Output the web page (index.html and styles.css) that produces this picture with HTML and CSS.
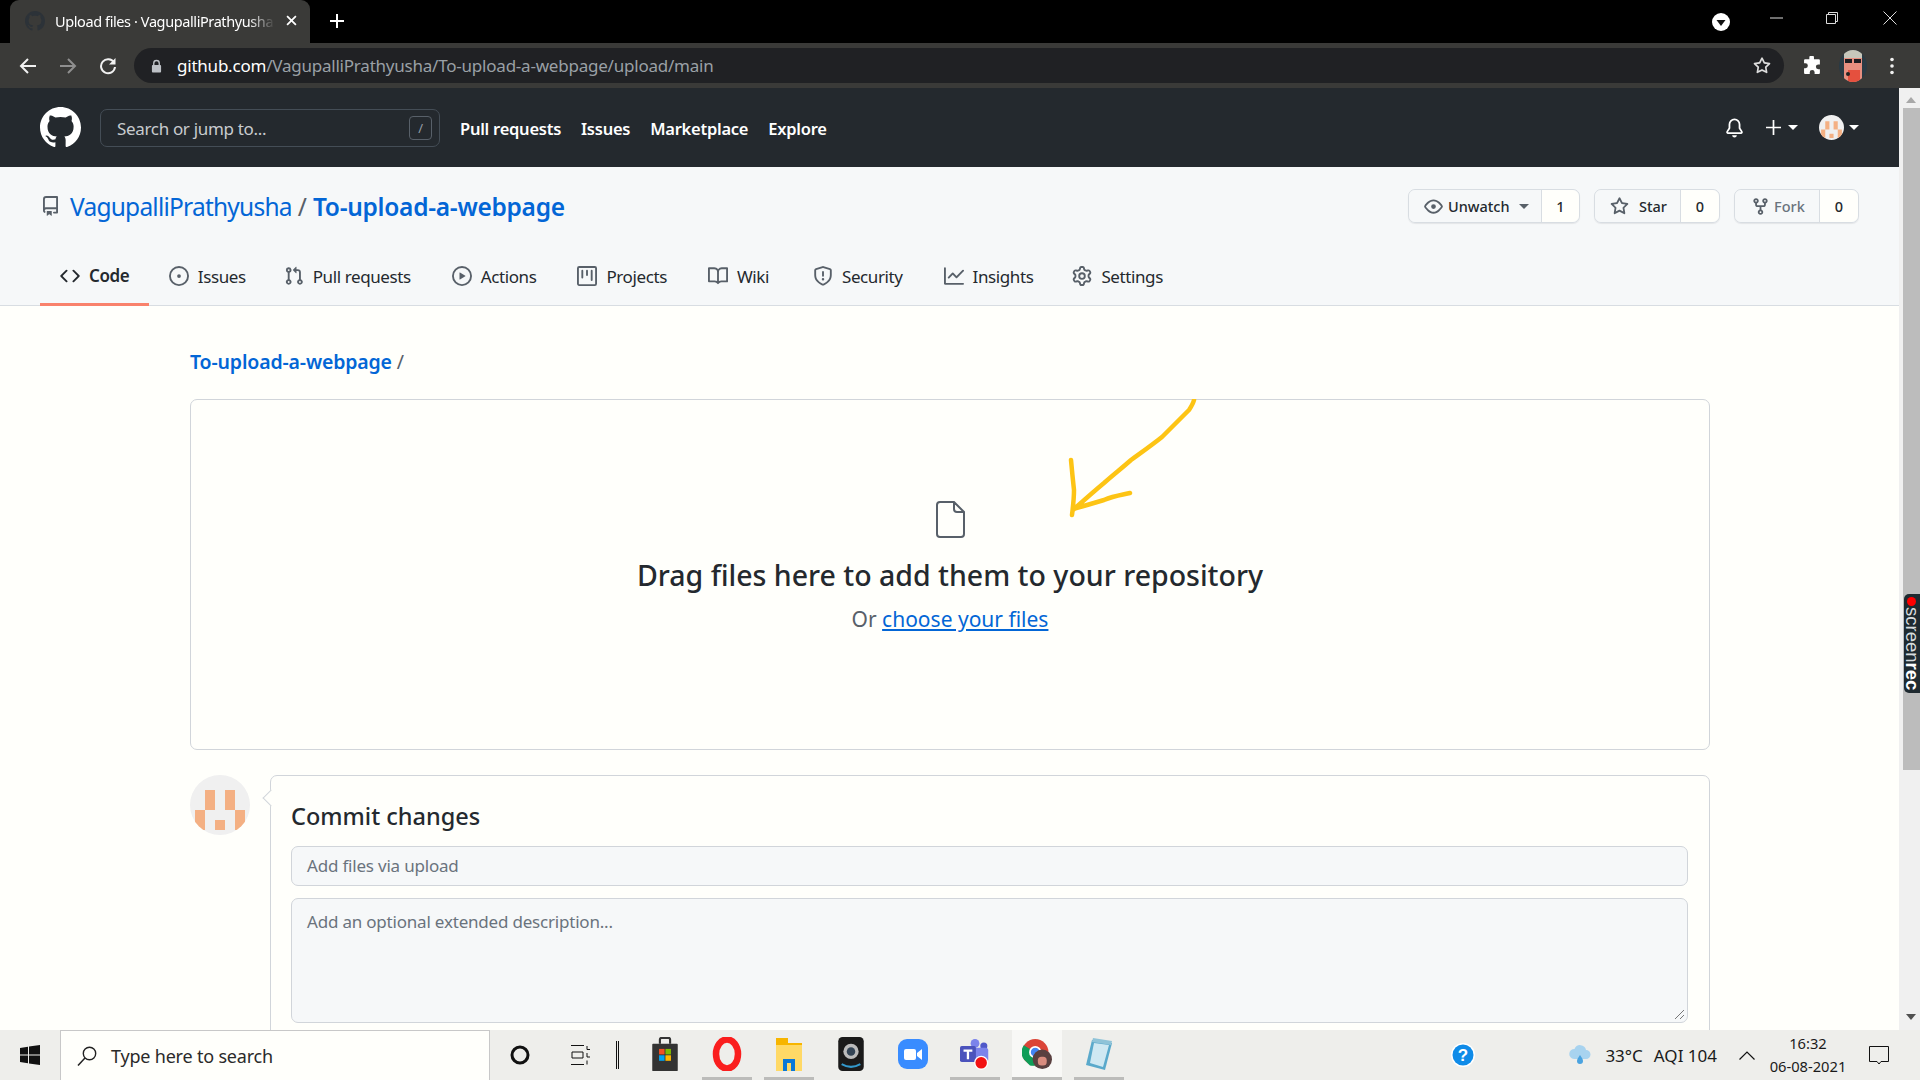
FILE: index.html
```html
<!DOCTYPE html>
<html>
<head>
<meta charset="utf-8">
<title>Upload files · VagupalliPrathyusha/To-upload-a-webpage</title>
<link rel="stylesheet" href="styles.css">
</head>
<body>

<!-- browser tabs -->
<div class="tabstrip">
  <div class="tab">
    <svg class="tab-favicon" viewBox="0 0 16 16"><path fill="#2c3238" d="M8 0C3.58 0 0 3.58 0 8c0 3.54 2.29 6.53 5.47 7.59.4.07.55-.17.55-.38 0-.19-.01-.82-.01-1.49-2.01.37-2.53-.49-2.69-.94-.09-.23-.48-.94-.82-1.13-.28-.15-.68-.52-.01-.53.63-.01 1.08.58 1.23.82.72 1.21 1.87.87 2.33.66.07-.52.28-.87.51-1.07-1.78-.2-3.64-.89-3.64-3.95 0-.87.31-1.59.82-2.15-.08-.2-.36-1.02.08-2.12 0 0 .67-.21 2.2.82.64-.18 1.32-.27 2-.27.68 0 1.36.09 2 .27 1.53-1.04 2.2-.82 2.2-.82.44 1.1.16 1.92.08 2.12.51.56.82 1.27.82 2.15 0 3.07-1.87 3.75-3.65 3.95.29.25.54.73.54 1.48 0 1.07-.01 1.93-.01 2.2 0 .21.15.46.55.38A8.013 8.013 0 0016 8c0-4.42-3.58-8-8-8z"/></svg>
    <span class="tab-title">Upload files · VagupalliPrathyusha</span>
    <svg class="tab-close" viewBox="0 0 10 10"><path d="M1 1l8 8M9 1l-8 8" stroke="#fff" stroke-width="1.6"/></svg>
  </div>
  <svg class="tab-new" viewBox="0 0 14 14"><path d="M7 0v14M0 7h14" stroke="#fff" stroke-width="2"/></svg>
  <svg class="tab-search" viewBox="0 0 18 18"><circle cx="9" cy="9" r="9" fill="#fff"/><path d="M4.5 7h9L9 13z" fill="#111"/></svg>
  <svg class="win-btn" viewBox="0 0 14 14"><path d="M0 7h13" stroke="#ddd"/></svg>
  <svg class="win-btn" viewBox="0 0 14 14"><path d="M1.5 3.5h9v9h-9zM3.5 3.5v-2h9v9h-2" fill="none" stroke="#ddd"/></svg>
  <svg class="win-btn win-close" viewBox="0 0 14 14"><path d="M.5.5l13 13M13.5.5l-13 13" stroke="#ddd"/></svg>
</div>

<!-- browser toolbar -->
<div class="toolbar">
  <svg class="nav-btn" viewBox="0 0 18 18"><path d="M17 9H2M9 2L2 9l7 7" fill="none" stroke="#f1f1f1" stroke-width="2"/></svg>
  <svg class="nav-btn" viewBox="0 0 18 18"><path d="M1 9h15M9 2l7 7-7 7" fill="none" stroke="#8f8f8f" stroke-width="2"/></svg>
  <svg class="nav-btn" viewBox="0 0 18 18"><path d="M15 5.5A7 7 0 1016 10" fill="none" stroke="#f1f1f1" stroke-width="2"/><path d="M16.5 1v6.5H10z" fill="#f1f1f1"/></svg>
  <div class="omnibox">
    <svg class="omni-lock" viewBox="0 0 12 14"><path d="M3 6V4a3 3 0 016 0v2" fill="none" stroke="#bdc1c6" stroke-width="1.5"/><rect y="6" x="1" width="10" height="8" rx="1" fill="#bdc1c6"/></svg>
    <span class="omni-url"><b>github.com</b>/VagupalliPrathyusha/To-upload-a-webpage/upload/main</span>
    <svg class="omni-star" viewBox="0 0 16 16"><path fill="#dcdcdc" d="M8 .25a.75.75 0 01.673.418l1.882 3.815 4.21.612a.75.75 0 01.416 1.279l-3.046 2.97.719 4.192a.75.75 0 01-1.088.791L8 12.347l-3.766 1.98a.75.75 0 01-1.088-.79l.72-4.194L.818 6.374a.75.75 0 01.416-1.28l4.21-.611L7.327.668A.75.75 0 018 .25zm0 2.445L6.615 5.5a.75.75 0 01-.564.41l-3.097.45 2.24 2.184a.75.75 0 01.216.664l-.528 3.084 2.769-1.456a.75.75 0 01.698 0l2.77 1.456-.53-3.084a.75.75 0 01.216-.664l2.24-2.183-3.096-.45a.75.75 0 01-.564-.41L8 2.694v.001z"/></svg>
  </div>
  <svg class="ext-puzzle" viewBox="0 0 18 18"><path fill="#fff" d="M6 1.5a2.2 2.2 0 014.4 0V3H15a1 1 0 011 1v4h-1.5a2.3 2.3 0 000 4.6H16V16a1 1 0 01-1 1h-4v-1.5a2.3 2.3 0 00-4.6 0V17H2a1 1 0 01-1-1v-4.5h1.3a2.3 2.3 0 000-4.6H1V4a1 1 0 011-1h4z"/></svg>
  <svg class="profile-pic" viewBox="0 0 28 32"><defs><clipPath id="pclip"><ellipse cx="14" cy="16" rx="14" ry="16"/></clipPath></defs><g clip-path="url(#pclip)"><rect width="28" height="32" fill="#2a3a44"/><rect x="5" y="0" width="18" height="8" fill="#c7c7bb"/><rect x="5" y="8" width="18" height="24" fill="#e88f80"/><rect x="6" y="9" width="7" height="4" fill="#1d1d22"/><rect x="15" y="9" width="7" height="4" fill="#1d1d22"/><rect x="9" y="20" width="12" height="12" fill="#e5503e"/><circle cx="9" cy="24" r="2" fill="#222"/></g></svg>
  <svg class="chrome-menu" viewBox="0 0 4 18"><circle cx="2" cy="2.5" r="1.8" fill="#f1f1f1"/><circle cx="2" cy="9" r="1.8" fill="#f1f1f1"/><circle cx="2" cy="15.5" r="1.8" fill="#f1f1f1"/></svg>
</div>

<div class="viewport">
  <div class="page">

    <!-- github header -->
    <header class="gh-header">
      <svg class="gh-logo" viewBox="0 0 16 16"><path fill="#fff" d="M8 0C3.58 0 0 3.58 0 8c0 3.54 2.29 6.53 5.47 7.59.4.07.55-.17.55-.38 0-.19-.01-.82-.01-1.49-2.01.37-2.53-.49-2.69-.94-.09-.23-.48-.94-.82-1.13-.28-.15-.68-.52-.01-.53.63-.01 1.08.58 1.23.82.72 1.21 1.87.87 2.33.66.07-.52.28-.87.51-1.07-1.78-.2-3.64-.89-3.64-3.95 0-.87.31-1.59.82-2.15-.08-.2-.36-1.02.08-2.12 0 0 .67-.21 2.2.82.64-.18 1.32-.27 2-.27.68 0 1.36.09 2 .27 1.53-1.04 2.2-.82 2.2-.82.44 1.1.16 1.92.08 2.12.51.56.82 1.27.82 2.15 0 3.07-1.87 3.75-3.65 3.95.29.25.54.73.54 1.48 0 1.07-.01 1.93-.01 2.2 0 .21.15.46.55.38A8.013 8.013 0 0016 8c0-4.42-3.58-8-8-8z"/></svg>
      <div class="gh-search">
        <span>Search or jump to...</span>
        <kbd class="gh-slash">/</kbd>
      </div>
      <nav class="gh-nav">
        <a>Pull requests</a>
        <a>Issues</a>
        <a>Marketplace</a>
        <a>Explore</a>
      </nav>
      <div class="gh-right">
        <svg class="gh-bell" viewBox="0 0 16 16"><path fill="#fff" d="M8 16a2 2 0 001.985-1.75c.017-.137-.097-.25-.235-.25h-3.5c-.138 0-.252.113-.235.25A2 2 0 008 16z"/><path fill="#fff" d="M8 1.5A3.5 3.5 0 004.5 5v2.947c0 .346-.102.683-.294.97l-1.703 2.556a.018.018 0 00-.003.01l.001.006c0 .002.002.004.004.006a.017.017 0 00.006.004l.007.001h10.964l.007-.001a.016.016 0 00.006-.004.016.016 0 00.004-.006l.001-.007a.017.017 0 00-.003-.01l-1.703-2.554a1.75 1.75 0 01-.294-.97V5A3.5 3.5 0 008 1.5zM3 5a5 5 0 0110 0v2.947c0 .05.015.098.042.139l1.703 2.555A1.518 1.518 0 0113.482 13H2.518a1.518 1.518 0 01-1.263-2.36l1.703-2.554A.25.25 0 003 7.947V5z"/></svg>
        <svg class="gh-plus" viewBox="0 0 14 14"><path d="M7 0v14M0 7h14" stroke="#fff" stroke-width="1.6"/></svg>
        <span class="caret caret-white"></span>
        <svg class="gh-avatar" viewBox="0 0 60 60"><rect width="60" height="60" fill="#f0f0f0"/><path fill="#f4b083" d="M15 15h10v20H15zM35 15h10v20H35zM5 35h10v20H5zM45 35h10v20H45zM25 45h10v10H25z"/></svg>
        <span class="caret caret-white"></span>
      </div>
    </header>

    <!-- repo head -->
    <div class="repo-head">
      <div class="repo-top">
        <svg class="repo-icon" viewBox="2 0 12 16"><path fill="#586069" d="M2 2.5A2.5 2.5 0 014.5 0h8.75a.75.75 0 01.75.75v12.5a.75.75 0 01-.75.75h-2.5a.75.75 0 110-1.5h1.75v-2h-8a1 1 0 00-.714 1.7.75.75 0 01-1.072 1.05A2.495 2.495 0 012 11.5v-9zm10.5-1V9h-8c-.356 0-.694.074-1 .208V2.5a1 1 0 011-1h8zM5 12.25v3.25a.25.25 0 00.4.2l1.45-1.087a.25.25 0 01.3 0L8.6 15.7a.25.25 0 00.4-.2v-3.25a.25.25 0 00-.25-.25h-3.5a.25.25 0 00-.25.25z"/></svg>
        <h1 class="repo-title"><a class="repo-owner">VagupalliPrathyusha</a><span class="repo-sep">/</span><a class="repo-name">To-upload-a-webpage</a></h1>
        <div class="repo-actions">
          <div class="btn-group">
            <div class="btn btn-unwatch">
              <svg viewBox="0 0 16 16"><path fill="#586069" d="M1.679 7.932c.412-.621 1.242-1.75 2.366-2.717C5.175 4.242 6.527 3.5 8 3.5c1.473 0 2.824.742 3.955 1.715 1.124.967 1.954 2.096 2.366 2.717a.119.119 0 010 .136c-.412.621-1.242 1.75-2.366 2.717C10.825 11.758 9.473 12.5 8 12.5c-1.473 0-2.824-.742-3.955-1.715C2.92 9.818 2.09 8.69 1.679 8.068a.119.119 0 010-.136zM8 2c-1.981 0-3.67.992-4.933 2.078C1.797 5.169.88 6.423.43 7.1a1.619 1.619 0 000 1.798c.45.678 1.367 1.932 2.637 3.024C4.329 13.008 6.019 14 8 14c1.981 0 3.67-.992 4.933-2.078 1.27-1.091 2.187-2.345 2.637-3.023a1.619 1.619 0 000-1.798c-.45-.678-1.367-1.932-2.637-3.023C11.671 2.992 9.981 2 8 2zm0 8a2 2 0 100-4 2 2 0 000 4z"/></svg>
              <span>Unwatch</span>
              <span class="caret caret-dark"></span>
            </div>
            <div class="btn-count btn-count-1">1</div>
          </div>
          <div class="btn-group">
            <div class="btn btn-star">
              <svg viewBox="0 0 16 16"><path fill="#586069" d="M8 .25a.75.75 0 01.673.418l1.882 3.815 4.21.612a.75.75 0 01.416 1.279l-3.046 2.97.719 4.192a.75.75 0 01-1.088.791L8 12.347l-3.766 1.98a.75.75 0 01-1.088-.79l.72-4.194L.818 6.374a.75.75 0 01.416-1.28l4.21-.611L7.327.668A.75.75 0 018 .25zm0 2.445L6.615 5.5a.75.75 0 01-.564.41l-3.097.45 2.24 2.184a.75.75 0 01.216.664l-.528 3.084 2.769-1.456a.75.75 0 01.698 0l2.77 1.456-.53-3.084a.75.75 0 01.216-.664l2.24-2.183-3.096-.45a.75.75 0 01-.564-.41L8 2.694v.001z"/></svg>
              <span>Star</span>
            </div>
            <div class="btn-count">0</div>
          </div>
          <div class="btn-group">
            <div class="btn btn-fork">
              <svg viewBox="0 0 16 16"><path fill="#586069" d="M5 3.25a.75.75 0 11-1.5 0 .75.75 0 011.5 0zm0 2.122a2.25 2.25 0 10-1.5 0v.878A2.25 2.25 0 005.75 8.5h1.5v2.128a2.251 2.251 0 101.5 0V8.5h1.5a2.25 2.25 0 002.25-2.25v-.878a2.25 2.25 0 10-1.5 0v.878a.75.75 0 01-.75.75h-4.5A.75.75 0 015 6.25v-.878zm3.75 7.378a.75.75 0 11-1.5 0 .75.75 0 011.5 0zm3-8.75a.75.75 0 100-1.5.75.75 0 000 1.5z"/></svg>
              <span>Fork</span>
            </div>
            <div class="btn-count btn-count-fork">0</div>
          </div>
        </div>
      </div>
      <nav class="repo-tabs">
        <a class="repo-tab active">
          <svg viewBox="0 0 16 16"><path fill="#24292e" d="M4.72 3.22a.75.75 0 011.06 1.06L2.06 8l3.72 3.72a.75.75 0 11-1.06 1.06L.47 8.53a.75.75 0 010-1.06l4.25-4.25zm6.56 0a.75.75 0 10-1.06 1.06L13.94 8l-3.72 3.72a.75.75 0 101.06 1.06l4.25-4.25a.75.75 0 000-1.06l-4.25-4.25z"/></svg>
          Code
        </a>
        <a class="repo-tab">
          <svg viewBox="0 0 16 16"><path fill="#586069" d="M8 9.5a1.5 1.5 0 100-3 1.5 1.5 0 000 3z"/><path fill="#586069" d="M8 0a8 8 0 100 16A8 8 0 008 0zM1.5 8a6.5 6.5 0 1113 0 6.5 6.5 0 01-13 0z"/></svg>
          Issues
        </a>
        <a class="repo-tab">
          <svg viewBox="0 0 16 16"><path fill="#586069" d="M7.177 3.073L9.573.677A.25.25 0 0110 .854v4.792a.25.25 0 01-.427.177L7.177 3.427a.25.25 0 010-.354zM3.75 2.5a.75.75 0 100 1.5.75.75 0 000-1.5zm-2.25.75a2.25 2.25 0 113 2.122v5.256a2.251 2.251 0 11-1.5 0V5.372A2.25 2.25 0 011.5 3.25zM11 2.5h-1V4h1a1 1 0 011 1v5.628a2.251 2.251 0 101.5 0V5A2.5 2.5 0 0011 2.5zm1 10.25a.75.75 0 111.5 0 .75.75 0 01-1.5 0zM3.75 12a.75.75 0 100 1.5.75.75 0 000-1.5z"/></svg>
          Pull requests
        </a>
        <a class="repo-tab">
          <svg viewBox="0 0 16 16"><path fill="#586069" d="M1.5 8a6.5 6.5 0 1113 0 6.5 6.5 0 01-13 0zM8 0a8 8 0 100 16A8 8 0 008 0zM6.379 5.227A.25.25 0 006 5.442v5.117a.25.25 0 00.379.214l4.264-2.559a.25.25 0 000-.428L6.379 5.227z"/></svg>
          Actions
        </a>
        <a class="repo-tab">
          <svg viewBox="0 0 16 16"><path fill="#586069" d="M1.75 0A1.75 1.75 0 000 1.75v12.5C0 15.216.784 16 1.75 16h12.5A1.75 1.75 0 0016 14.25V1.75A1.75 1.75 0 0014.25 0H1.75zM1.5 1.75a.25.25 0 01.25-.25h12.5a.25.25 0 01.25.25v12.5a.25.25 0 01-.25.25H1.75a.25.25 0 01-.25-.25V1.75zM11.75 3a.75.75 0 00-.75.75v7.5a.75.75 0 001.5 0v-7.5a.75.75 0 00-.75-.75zm-8.25.75a.75.75 0 011.5 0v5.5a.75.75 0 01-1.5 0v-5.5zM8 3a.75.75 0 00-.75.75v3.5a.75.75 0 001.5 0v-3.5A.75.75 0 008 3z"/></svg>
          Projects
        </a>
        <a class="repo-tab">
          <svg viewBox="0 0 16 16"><path fill="#586069" d="M0 1.75A.75.75 0 01.75 1h4.253c1.227 0 2.317.59 3 1.501A3.744 3.744 0 0111.006 1h4.245a.75.75 0 01.75.75v10.5a.75.75 0 01-.75.75h-4.507a2.25 2.25 0 00-1.591.659l-.622.621a.75.75 0 01-1.06 0l-.622-.621A2.25 2.25 0 005.258 13H.75a.75.75 0 01-.75-.75V1.75zm8.755 3a2.25 2.25 0 012.25-2.25H14.5v9h-3.757c-.71 0-1.4.201-1.992.572l.004-7.322zm-1.504 7.324l.004-5.073-.002-2.253A2.25 2.25 0 005.003 2.5H1.5v9h3.757a3.75 3.75 0 011.994.574z"/></svg>
          Wiki
        </a>
        <a class="repo-tab">
          <svg viewBox="0 0 16 16"><path fill="#586069" d="M7.467.133a1.75 1.75 0 011.066 0l5.25 1.68A1.75 1.75 0 0115 3.48V7c0 1.566-.32 3.182-1.303 4.682-.983 1.498-2.585 2.813-5.032 3.855a1.7 1.7 0 01-1.33 0c-2.447-1.042-4.049-2.357-5.032-3.855C1.32 10.182 1 8.566 1 7V3.48a1.75 1.75 0 011.217-1.667l5.25-1.68zm.61 1.429a.25.25 0 00-.153 0l-5.25 1.68a.25.25 0 00-.174.238V7c0 1.358.275 2.666 1.057 3.86.784 1.194 2.121 2.34 4.366 3.297a.2.2 0 00.154 0c2.245-.956 3.582-2.104 4.366-3.298C13.225 9.666 13.5 8.36 13.5 7V3.48a.25.25 0 00-.174-.237l-5.25-1.68zM9 10.5a1 1 0 11-2 0 1 1 0 012 0zm-.25-5.75a.75.75 0 10-1.5 0v3a.75.75 0 001.5 0v-3z"/></svg>
          Security
        </a>
        <a class="repo-tab">
          <svg viewBox="0 0 16 16"><path fill="#586069" d="M1.5 1.75a.75.75 0 00-1.5 0v12.5c0 .414.336.75.75.75h14.5a.75.75 0 000-1.5H1.5V1.75zm14.28 2.53a.75.75 0 00-1.06-1.06L10 7.94 7.53 5.47a.75.75 0 00-1.06 0L3.22 8.72a.75.75 0 001.06 1.06L7 7.06l2.47 2.47a.75.75 0 001.06 0l5.25-5.25z"/></svg>
          Insights
        </a>
        <a class="repo-tab">
          <svg viewBox="0 0 16 16"><path fill="#586069" d="M7.429 1.525a6.593 6.593 0 011.142 0c.036.003.108.036.137.146l.289 1.105c.147.56.55.967.997 1.189.174.086.341.183.501.29.417.278.97.423 1.53.27l1.102-.303c.11-.03.175.016.195.046.219.31.41.641.573.989.014.031.022.11-.059.19l-.815.806c-.411.406-.562.957-.53 1.456a4.588 4.588 0 010 .582c-.032.499.119 1.05.53 1.456l.815.806c.08.08.073.159.059.19a6.494 6.494 0 01-.573.99c-.02.029-.086.074-.195.045l-1.103-.303c-.559-.153-1.112-.008-1.529.27-.16.107-.327.204-.5.29-.449.222-.851.628-.998 1.189l-.289 1.105c-.029.11-.101.143-.137.146a6.613 6.613 0 01-1.142 0c-.036-.003-.108-.037-.137-.146l-.289-1.105c-.147-.56-.55-.967-.997-1.189a4.502 4.502 0 01-.501-.29c-.417-.278-.97-.423-1.53-.27l-1.102.303c-.11.03-.175-.016-.195-.046a6.492 6.492 0 01-.573-.989c-.014-.031-.022-.11.059-.19l.815-.806c.411-.406.562-.957.53-1.456a4.587 4.587 0 010-.582c.032-.499-.119-1.05-.53-1.456l-.815-.806c-.08-.08-.073-.159-.059-.19a6.44 6.44 0 01.573-.99c.02-.029.086-.075.195-.045l1.103.303c.559.153 1.112.008 1.529-.27.16-.107.327-.204.5-.29.449-.222.851-.628.998-1.189l.289-1.105c.029-.11.101-.143.137-.146zM8 0c-.236 0-.47.01-.701.03-.743.065-1.29.615-1.458 1.261l-.29 1.106c-.017.066-.078.158-.211.224a5.994 5.994 0 00-.668.386c-.123.082-.233.09-.3.071L3.27 2.776c-.644-.177-1.392.02-1.82.63a7.977 7.977 0 00-.704 1.217c-.315.675-.111 1.422.363 1.891l.815.806c.05.048.098.147.088.294a6.084 6.084 0 000 .772c.01.147-.038.246-.088.294l-.815.806c-.474.469-.678 1.216-.363 1.891.2.428.436.835.704 1.218.428.609 1.176.806 1.82.63l1.103-.303c.066-.019.176-.011.299.071.213.143.436.272.668.386.133.066.194.158.212.224l.289 1.106c.169.646.715 1.196 1.458 1.26a8.094 8.094 0 001.402 0c.743-.064 1.29-.614 1.458-1.26l.29-1.106c.017-.066.078-.158.211-.224a5.98 5.98 0 00.668-.386c.123-.082.233-.09.3-.071l1.102.302c.644.177 1.392-.02 1.82-.63.268-.382.505-.789.704-1.217.315-.675.111-1.422-.364-1.891l-.814-.806c-.05-.048-.098-.147-.088-.294a6.1 6.1 0 000-.772c-.01-.147.039-.246.088-.294l.814-.806c.475-.469.679-1.216.364-1.891a7.992 7.992 0 00-.704-1.218c-.428-.609-1.176-.806-1.82-.63l-1.103.303c-.066.019-.176.011-.299-.071a5.991 5.991 0 00-.668-.386c-.133-.066-.194-.158-.212-.224L10.16 1.29C9.99.645 9.444.095 8.701.031A8.094 8.094 0 008 0zm1.5 8a1.5 1.5 0 11-3 0 1.5 1.5 0 013 0zM11 8a3 3 0 11-6 0 3 3 0 016 0z"/></svg>
          Settings
        </a>
      </nav>
    </div>

    <!-- upload form -->
    <main class="container">
      <div class="crumbs"><a>To-upload-a-webpage</a> <span>/</span></div>

      <div class="dropzone">
        <svg class="file-icon" viewBox="0 0 30 37"><path d="M2 4a3 3 0 013-3h14l10 10v22a3 3 0 01-3 3H5a3 3 0 01-3-3zM19 1v7a3 3 0 003 3h7" fill="none" stroke="#586069" stroke-width="2"/></svg>
        <h2 class="drop-title">Drag files here to add them to your repository</h2>
        <p class="drop-sub">Or <a>choose your files</a></p>
        <!-- hand drawn arrow from the screen recorder -->
        <svg class="scribble" viewBox="0 0 140 125"><path d="M134 1c-1 4-3 7-5 10-9 9-18 18-27 27-10 8-20 15-31 23-9 8-18 15-27 23-12 10-22 19-31 27M11 61c1 11 2 21 3 30 0 9-1 17-2 25M13 110c11-3 21-6 31-9 9-4 17-5 26-7" fill="none" stroke="#fdc414" stroke-width="4.5" stroke-linecap="round" stroke-linejoin="round"/></svg>
      </div>

      <div class="commit">
        <svg class="commit-avatar" viewBox="0 0 60 60"><rect width="60" height="60" fill="#f0f0f0"/><path fill="#f4b083" d="M15 15h10v20H15zM35 15h10v20H35zM5 35h10v20H5zM45 35h10v20H45zM25 45h10v10H25z"/></svg>
        <div class="commit-box">
          <h3 class="commit-title">Commit changes</h3>
          <div class="field field-input">Add files via upload</div>
          <div class="field field-area">
            Add an optional extended description...
            <svg class="resize-grip" viewBox="0 0 12 12"><path d="M11 2L2 11M11 7l-4 4" stroke="#777" fill="none"/></svg>
          </div>
        </div>
      </div>
    </main>
  </div>

  <!-- page scrollbar -->
  <div class="scrollbar">
    <span class="sb-up"></span>
    <div class="sb-thumb"></div>
    <span class="sb-down"></span>
  </div>

  <div class="screenrec"><i></i>screen<b>rec</b></div>
</div>

<!-- windows taskbar -->
<footer class="taskbar">
  <div class="tb-start">
    <svg viewBox="0 0 20 20"><path fill="#111" d="M0 3l8-1.2V9.500H0zM9 1.600L20 0v9.500H9zM0 10.500h8v7.700L0 17zM9 10.500h11V20L9 18.400z"/></svg>
  </div>
  <div class="tb-search">
    <svg viewBox="0 0 20 20"><circle cx="12.5" cy="7.5" r="6.2" fill="none" stroke="#222" stroke-width="1.4"/><path d="M8 12L1 19.5" stroke="#222" stroke-width="1.5"/></svg>
    <span>Type here to search</span>
  </div>
  <div class="tb-sys">
    <svg class="tb-cortana" viewBox="0 0 20 20"><circle cx="10" cy="10" r="8" fill="none" stroke="#111" stroke-width="3"/></svg>
  </div>
  <div class="tb-sys">
    <svg class="tb-taskview" viewBox="0 0 20 20"><path fill="none" stroke="#111" d="M1 .5h13M1 19.5h13M2 7h11v6H2zM17 1v3.5h3M17 8v4h3M17 15.5v4"/></svg>
  </div>
  <div class="tb-divider"></div>
  <div class="tb-app">
    <svg viewBox="0 0 30 40"><path d="M9 8V3a2 2 0 012-2h8a2 2 0 012 2v5" fill="none" stroke="#333" stroke-width="2.5"/><rect y="8" width="30" height="32" rx="1" fill="#333"/><rect x="8" y="14" width="6.5" height="6.5" fill="#f25022"/><rect x="15.5" y="14" width="6.5" height="6.5" fill="#7fba00"/><rect x="8" y="21.5" width="6.5" height="6.5" fill="#00a4ef"/><rect x="15.5" y="21.5" width="6.5" height="6.5" fill="#ffb900"/></svg>
  </div>
  <div class="tb-app running">
    <svg viewBox="0 0 30 34"><ellipse cx="15" cy="17" rx="11" ry="14.5" fill="none" stroke="#fa1e1e" stroke-width="6.5"/></svg>
  </div>
  <div class="tb-app running">
    <svg viewBox="0 0 28 34"><path fill="#f7b500" d="M1 1h12v5h14v28H1z"/><path fill="#ffd966" d="M1 8h26v26H1z"/><path fill="#0a78d7" d="M8 34V22h12v12h-4v-8h-4v8z"/></svg>
  </div>
  <div class="tb-app">
    <svg viewBox="0 0 30 40"><rect width="30" height="40" rx="5" fill="#1a1a1a"/><circle cx="15" cy="17" r="9" fill="#bbb"/><circle cx="15" cy="17" r="5" fill="#345"/><path d="M4 32c7 4 15 4 22 0" fill="none" stroke="#39c" stroke-width="2.5"/></svg>
  </div>
  <div class="tb-app">
    <svg viewBox="0 0 30 30"><rect width="30" height="30" rx="9" fill="#398cff"/><rect x="6" y="10" width="12" height="11" rx="2" fill="#fff"/><path d="M19 14l5-4v11l-5-4z" fill="#fff"/></svg>
  </div>
  <div class="tb-app running">
    <svg viewBox="0 0 34 38"><circle cx="17" cy="7" r="5" fill="#7b83eb"/><circle cx="27" cy="10" r="4" fill="#5059c9"/><rect x="13" y="12" width="19" height="16" rx="3" fill="#7b83eb"/><rect y="10" width="18" height="18" rx="2" fill="#4b53bc"/><path d="M4 14h10v2.5h-3.700V25H7.700v-8.500H4z" fill="#fff"/><circle cx="24" cy="29" r="8" fill="#fff"/><circle cx="24" cy="29" r="6.5" fill="#f21212"/></svg>
  </div>
  <div class="tb-app running active">
    <svg viewBox="0 0 34 34"><circle cx="15" cy="15" r="15" fill="#db4437"/><path d="M15 15L2 7a15 15 0 000 16l7 7a15 15 0 006 0z" fill="#0f9d58"/><circle cx="15" cy="15" r="6" fill="#4285f4" stroke="#fff" stroke-width="2"/><circle cx="23" cy="23" r="11" fill="#5a4040"/><rect x="18" y="20" width="10" height="10" rx="4" fill="#d98c7f"/></svg>
  </div>
  <div class="tb-app running">
    <svg viewBox="0 0 28 34"><path fill="#5aa9cb" d="M7 3l20 3-7 27L1 28z"/><path fill="#cfe8f2" d="M9 6l15 2-6 22L5 26z"/><path fill="#8fc3d8" d="M8 1l19 3-1 4L7 5z"/></svg>
  </div>

  <div class="tb-tray">
    <svg class="tray-help" viewBox="0 0 24 24"><circle cx="12" cy="12" r="12" fill="#fff"/><circle cx="12" cy="12" r="10.5" fill="#0f8be8"/><text x="12" y="18" text-anchor="middle" class="tray-help-q">?</text></svg>
    <svg class="tray-weather" viewBox="0 0 24 22"><path fill="#a8d3ef" d="M6 15a5 5 0 01.5-10A6 6 0 0118 6a4.5 4.5 0 010 9z"/><path fill="#4aa3e0" d="M12 11c2 3 3 4 3 6a3 3 0 01-6 0c0-2 1-3 3-6z"/></svg>
    <span class="tray-temp">33°C</span>
    <span class="tray-aqi">AQI 104</span>
    <svg class="tray-chevron" viewBox="0 0 16 9"><path d="M.5 8.5L8 1l7.5 7.5" fill="none" stroke="#111" stroke-width="1.2"/></svg>
    <div class="tray-clock"><div>16:32</div><div>06-08-2021</div></div>
    <svg class="tray-notif" viewBox="0 0 20 19"><path d="M.5.5h19v15H12l-2 2.5-2-2.5H.5z" fill="none" stroke="#111"/></svg>
  </div>
</footer>

</body>
</html>
```

FILE: styles.css
```css
* {
   box-sizing: border-box;
}

html, body {
   margin: 0;
   height: 100%;
   overflow: hidden;
}

body {
   width: 1920px;
   height: 1080px;
   display: flex;
   flex-direction: column;
   font-family: "Noto Sans", "Open Sans", sans-serif;
   font-size: 17px;
   color: #24292e;
   background-color: #fffffb;
}

svg {
   display: block;
   flex: none;
}

/* octicons have holes */
svg path {
   fill-rule: evenodd;
}

h1, h2, h3, p {
   margin: 0;
   font-weight: normal;
}

/* browser tabs */

.tabstrip {
   height: 43px;
   flex: none;
   display: flex;
   align-items: center;
   background-color: #000;
}

.tab {
   width: 300px;
   height: 43px;
   margin-left: 10px;
   padding: 0 0 2px 15px;
   display: flex;
   align-items: center;
   background-color: #3a3a38;
   border-radius: 9px 9px 0 0;
}

.tab-favicon {
   width: 20px;
   height: 20px;
}

.tab-title {
   width: 220px;
   margin-left: 10px;
   font-size: 14.5px;
   letter-spacing: -0.4px;
   color: #fff;
   white-space: nowrap;
   -webkit-mask-image: linear-gradient(to right, #000 88%, transparent);
   mask-image: linear-gradient(to right, #000 88%, transparent);
}

.tab-close {
   width: 11px;
   height: 11px;
   margin-left: 11px;
}

.tab-new {
   width: 14px;
   height: 14px;
   margin-left: 20px;
   margin-top: -2px;
}

.tab-search {
   width: 18px;
   height: 18px;
   margin-left: 1368px;
}

.win-btn {
   width: 14px;
   height: 14px;
   margin-left: 41px;
   margin-top: -7px;
}

.tab-search + .win-btn {
   margin-left: 40px;
}

.win-close {
   margin-left: 44px;
}

/* browser toolbar */

.toolbar {
   height: 45px;
   flex: none;
   display: flex;
   align-items: center;
   padding-left: 19px;
   background-color: #3a3a38;
}

.nav-btn {
   width: 18px;
   height: 18px;
   margin-right: 22px;
}

.omnibox {
   width: 1650px;
   height: 35px;
   margin-left: -5px;
   padding-left: 17px;
   display: flex;
   align-items: center;
   background-color: #202124;
   border-radius: 18px;
}

.omni-lock {
   width: 11px;
   height: 14px;
}

.omni-url {
   margin-left: 15px;
   font-size: 17px;
   letter-spacing: -0.22px;
   color: #9aa0a6;
   white-space: nowrap;
}

.omni-url b {
   font-weight: normal;
   color: #fff;
}

.omni-star {
   width: 18px;
   height: 18px;
   margin-left: auto;
   margin-right: 13px;
}

.ext-puzzle {
   width: 19px;
   height: 19px;
   margin-left: 19px;
}

.profile-pic {
   width: 28px;
   height: 32px;
   margin-left: 17px;
}

.chrome-menu {
   width: 4px;
   height: 18px;
   margin-left: 23px;
}

/* page and scrollbar */

.viewport {
   flex: 1;
   min-height: 0;
   display: flex;
   position: relative;
}

.page {
   width: 1899px;
   overflow: hidden;
}

.scrollbar {
   width: 21px;
   padding-left: 2px;
   display: flex;
   flex-direction: column;
   align-items: center;
   background-color: #f0f0f0;
}

.sb-up {
   margin: 9px 0 5px;
   width: 0;
   height: 0;
   border-left: 5px solid transparent;
   border-right: 5px solid transparent;
   border-bottom: 6px solid #a8a8a8;
}

.sb-thumb {
   width: 17px;
   height: 662px;
   margin-left: 1px;
   background-color: #bcbcbc;
}

.sb-down {
   margin-top: auto;
   margin-bottom: 10px;
   width: 0;
   height: 0;
   border-left: 5px solid transparent;
   border-right: 5px solid transparent;
   border-top: 6px solid #505050;
}

.screenrec {
   position: absolute;
   left: 1904px;
   top: 506px;
   width: 16px;
   height: 99px;
   padding-top: 13px;
   writing-mode: vertical-rl;
   font-family: "Liberation Sans", sans-serif;
   font-size: 18.5px;
   line-height: 16px;
   color: #d8dcde;
   background-color: #1f2a30;
   border-radius: 5px 0 0 5px;
   white-space: nowrap;
}

.screenrec i {
   position: absolute;
   top: 3px;
   left: 3px;
   width: 9px;
   height: 9px;
   background-color: #f00;
   border-radius: 50%;
}

.screenrec b {
   color: #fff;
}

/* github header */

.gh-header {
   height: 79px;
   display: flex;
   align-items: center;
   padding-left: 40px;
   background-color: #24292e;
}

.gh-logo {
   width: 41px;
   height: 41px;
}

.gh-search {
   width: 340px;
   height: 38px;
   margin-left: 19px;
   padding: 0 7px 0 16px;
   display: flex;
   align-items: center;
   justify-content: space-between;
   letter-spacing: -0.33px;
   color: #c8cbce;
   border: 1px solid #444d56;
   border-radius: 7px;
}

.gh-search span {
   padding-top: 2px;
}

.gh-slash {
   width: 23px;
   height: 24px;
   font-family: inherit;
   font-size: 13px;
   line-height: 22px;
   text-align: center;
   color: #959da5;
   border: 1px solid #586069;
   border-radius: 4px;
}

.gh-nav {
   display: flex;
   gap: 20px;
   margin-left: 20px;
   padding-top: 2px;
   font-size: 16.5px;
   font-weight: 600;
   letter-spacing: -0.25px;
   color: #fff;
}

.gh-right {
   margin-left: auto;
   padding-right: 40px;
   display: flex;
   align-items: center;
}

.gh-bell {
   width: 19px;
   height: 22px;
}

.gh-plus {
   width: 15px;
   height: 15px;
   margin-left: 22px;
   margin-right: 7px;
}

.gh-avatar {
   width: 25px;
   height: 25px;
   margin-left: 21px;
   margin-right: 5px;
   border-radius: 50%;
}

.caret {
   display: inline-block;
   width: 0;
   height: 0;
   border-left: 5px solid transparent;
   border-right: 5px solid transparent;
   border-top: 5px solid #fff;
}

.caret-dark {
   border-top-color: #586069;
}

/* repo head */

.repo-head {
   height: 139px;
   background-color: #f6f8f9;
   border-bottom: 1px solid #d8dde2;
}

.repo-top {
   height: 81px;
   padding: 22px 40px 0 43px;
   display: flex;
   align-items: flex-start;
}

.repo-icon {
   width: 15px;
   height: 20px;
   margin-top: 7px;
}

.repo-title {
   margin-left: 12px;
   font-size: 24.5px;
   line-height: 36px;
   color: #0366d6;
   white-space: nowrap;
}

.repo-owner {
   letter-spacing: -0.77px;
}

.repo-sep {
   margin: 0 6px;
   color: #586069;
}

.repo-name {
   font-weight: 600;
   letter-spacing: -0.28px;
}

.repo-actions {
   margin-left: auto;
   display: flex;
   gap: 14px;
}

.btn-group {
   height: 34px;
   display: flex;
   font-size: 14.5px;
   font-weight: 500;
   line-height: 32px;
   border: 1px solid #d8dde2;
   border-radius: 7px;
   box-shadow: 0 1px 1px rgba(27, 31, 35, 0.08);
}

.btn {
   display: flex;
   align-items: center;
   background-color: #f6f8f9;
   border-right: 1px solid #d8dde2;
   border-radius: 7px 0 0 7px;
}

.btn svg {
   width: 19px;
   height: 19px;
}

.btn-unwatch {
   width: 133px;
   padding-left: 15px;
}

.btn-unwatch span:first-of-type {
   margin-left: 5px;
}

.btn-unwatch .caret {
   margin-left: 9px;
}

.btn-star {
   width: 86px;
   padding-left: 15px;
}

.btn-star span {
   margin-left: 10px;
}

.btn-fork {
   width: 85px;
   padding-left: 16px;
   color: #6a737d;
}

.btn-fork span {
   margin-left: 4px;
}

.btn-count {
   width: 38px;
   text-align: center;
   background-color: #fffffb;
   border-radius: 0 7px 7px 0;
}

.btn-count-1 {
   width: 37px;
}

.btn-count-fork {
   width: 38px;
}

.repo-tabs {
   display: flex;
   height: 57px;
   padding-left: 40px;
}

.repo-tab {
   display: flex;
   align-items: center;
   gap: 9px;
   height: 58px;
   padding: 0 20.5px 2px;
   font-size: 17px;
   letter-spacing: -0.4px;
   color: #24292e;
   white-space: nowrap;
}

.repo-tab svg {
   width: 20px;
   height: 20px;
}

.repo-tab.active {
   padding: 0 20px;
   font-weight: 600;
   border-bottom: 3px solid #f9826c;
}

.repo-tab:nth-child(2) {
   margin-left: -1px;
}

.repo-tab:nth-child(3) {
   margin-left: -3px;
}

.repo-tab:nth-child(7) {
   margin-left: 3px;
}

.repo-tab:nth-child(9) {
   margin-left: -2px;
}

/* upload form */

.container {
   padding: 0 189px 0 190px;
}

.crumbs {
   height: 93px;
   padding-top: 41px;
   font-size: 19.5px;
   line-height: 30px;
   letter-spacing: -0.15px;
   color: #586069;
}

.crumbs a {
   font-weight: 600;
   color: #0366d6;
}

.dropzone {
   position: relative;
   height: 351px;
   padding-top: 101px;
   display: flex;
   flex-direction: column;
   align-items: center;
   border: 1px solid #d1d5da;
   border-radius: 7px;
}

.file-icon {
   width: 30px;
   height: 37px;
}

.drop-title {
   margin-top: 17px;
   font-size: 28.5px;
   line-height: 40px;
   font-weight: 500;
}

.drop-sub {
   margin-top: 9px;
   font-size: 21px;
   line-height: 30px;
   color: #586069;
}

.drop-sub a {
   color: #0366d6;
   text-decoration: underline;
}

.scribble {
   position: absolute;
   left: 869px;
   top: -1px;
   width: 140px;
   height: 125px;
}

.commit {
   margin-top: 25px;
   display: flex;
   gap: 20px;
}

.commit-avatar {
   width: 60px;
   height: 60px;
   border-radius: 50%;
}

.commit-box {
   position: relative;
   flex: 1;
   height: 400px;
   padding: 0 21px 0 20px;
   border: 1px solid #d1d5da;
   border-radius: 7px;
}

/* little pointer towards the avatar */
.commit-box::before {
   content: "";
   position: absolute;
   left: -6px;
   top: 16px;
   width: 11px;
   height: 11px;
   background-color: #fffffb;
   border-left: 1px solid #d1d5da;
   border-bottom: 1px solid #d1d5da;
   transform: rotate(45deg);
}

.commit-title {
   height: 70px;
   padding-top: 22px;
   font-size: 23.5px;
   line-height: 36px;
   font-weight: 500;
}

.field {
   padding-left: 15px;
   font-size: 17px;
   letter-spacing: -0.2px;
   color: #6a737d;
   background-color: #f6f8f9;
   border: 1px solid #d1d5da;
   border-radius: 7px;
}

.field-input {
   height: 40px;
   line-height: 38px;
}

.field-area {
   position: relative;
   height: 125px;
   margin-top: 12px;
   padding-top: 10px;
   line-height: 26px;
}

.resize-grip {
   position: absolute;
   right: 2px;
   bottom: 2px;
   width: 12px;
   height: 12px;
}

/* windows taskbar */

.taskbar {
   height: 50px;
   flex: none;
   display: flex;
   align-items: stretch;
   background-color: #eeeeeb;
}

.tb-start {
   width: 60px;
   padding-left: 20px;
   display: flex;
   align-items: center;
}

.tb-start svg {
   width: 20px;
   height: 20px;
}

.tb-search {
   width: 430px;
   padding-left: 16px;
   display: flex;
   align-items: center;
   font-size: 18px;
   letter-spacing: -0.2px;
   color: #2a2a2a;
   background-color: #fffffb;
   border: 1px solid #c8c8c8;
   border-bottom: 0;
}

.tb-search svg {
   width: 20px;
   height: 20px;
   margin-right: 14px;
}

.tb-sys {
   width: 60px;
   display: flex;
   align-items: center;
   justify-content: center;
}

.tb-cortana, .tb-taskview {
   width: 20px;
   height: 20px;
}

.tb-divider {
   width: 3px;
   height: 28px;
   margin: 11px 15px 0 6px;
   border-left: 1px solid #111;
   border-right: 1px solid #111;
}

.tb-app {
   width: 50px;
   margin: 0 6px;
   display: flex;
   align-items: center;
   justify-content: center;
   border-bottom: 3px solid transparent;
}

.tb-app svg {
   width: 30px;
   height: 34px;
}

.tb-app.running {
   border-bottom-color: #bcbcba;
}

.tb-app.active {
   background-color: #f8f8f6;
}

.tb-tray {
   margin-left: auto;
   position: relative;
   display: flex;
   align-items: center;
   font-family: "Noto Sans", sans-serif;
   color: #1a1a1a;
}

.tray-help {
   width: 24px;
   height: 24px;
   margin-right: 93px;
}

.tray-help-q {
   font-family: "Liberation Sans", sans-serif;
   font-size: 17px;
   font-weight: bold;
   fill: #fff;
}

.tray-weather {
   width: 24px;
   height: 22px;
   margin-right: 13px;
}

.tray-temp, .tray-aqi {
   font-size: 17px;
   white-space: nowrap;
}

.tray-aqi {
   margin-left: 11px;
}

.tray-chevron {
   width: 16px;
   height: 9px;
   margin-left: 22px;
}

.tray-clock {
   width: 90px;
   margin-left: 8px;
   font-size: 14.7px;
   line-height: 23px;
   text-align: center;
}

.tray-notif {
   width: 20px;
   height: 19px;
   margin-left: 16px;
   margin-right: 31px;
}
```
